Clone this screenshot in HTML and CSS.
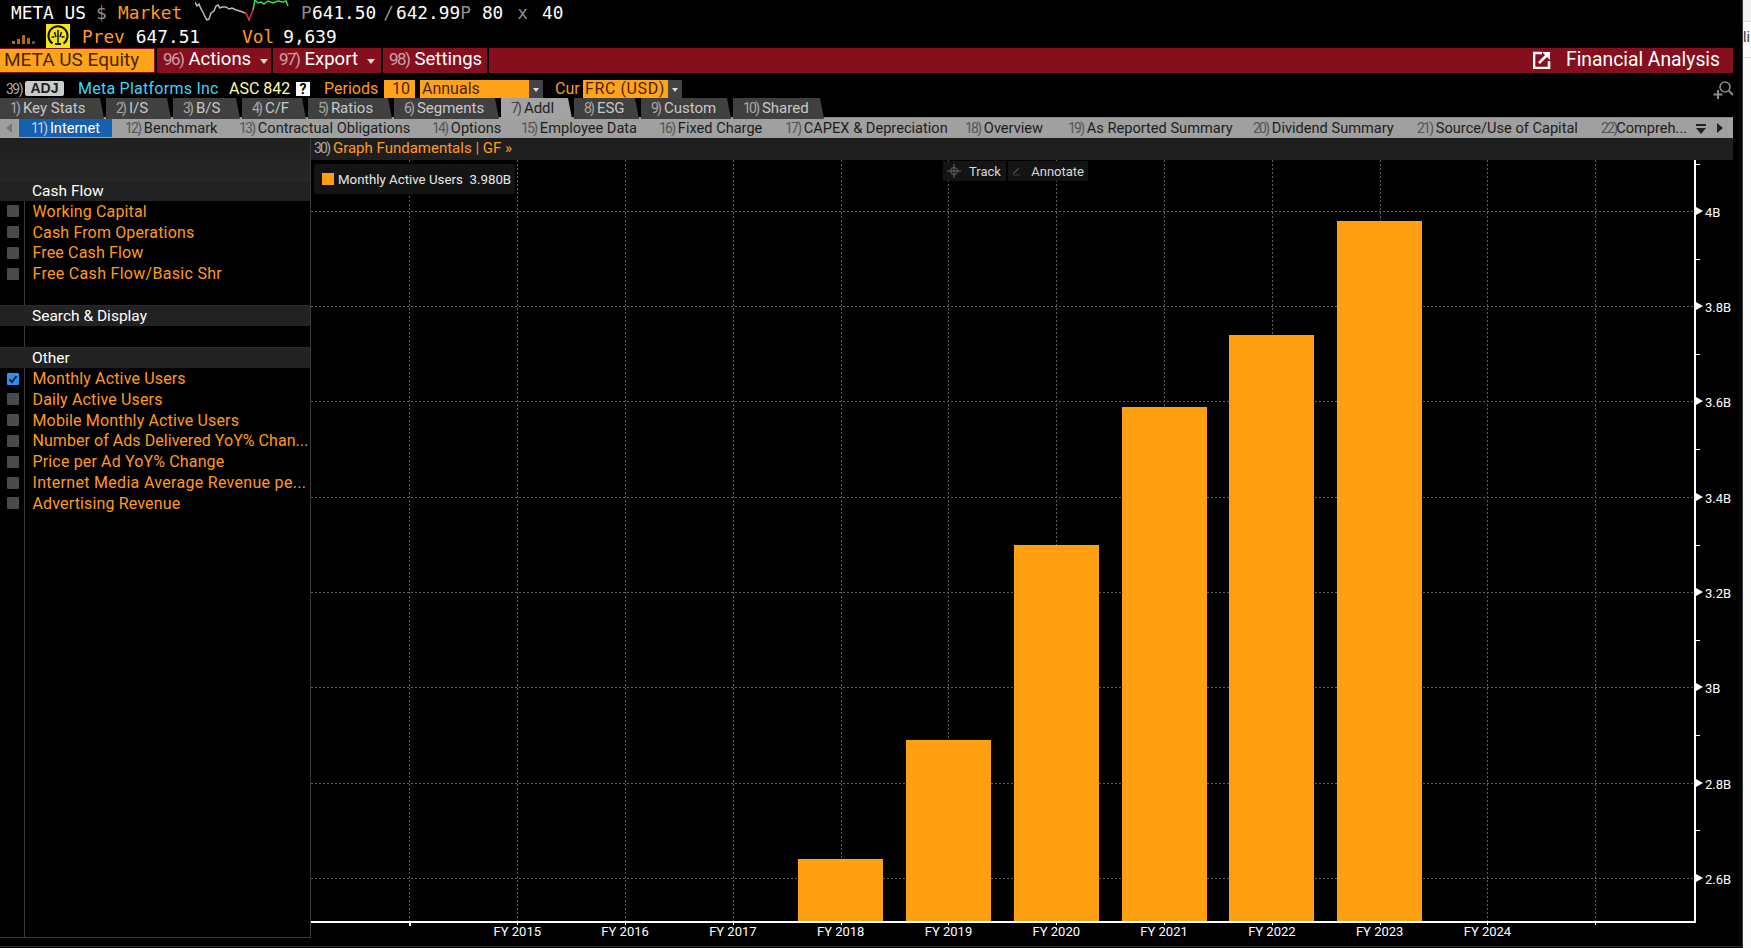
FILE: index.html
```html
<!DOCTYPE html>
<html lang="en">
<head>
<meta charset="utf-8">
<title>META US Equity - Financial Analysis</title>
<link rel="stylesheet" href="styles.css">
</head>
<body>
<div class="terminal">
  <div class="quote">
    <span class="w sp-a">META US</span><span class="g sp-b">$</span><span class="o sp-c">Market</span>
    <svg class="spark" viewBox="0 0 98 24" width="98" height="24"><polyline fill="none" stroke="#bbb" stroke-width="1.500" points="0,2 2,6 4,4 6,9 8,12 10,17 12,20 14,19 16,13 19,11 21,6 23,5 25,8 27,7 31,7 34,9 37,8 41,10 45,11 50,13"/><polyline fill="none" stroke="#e0304a" stroke-width="1.500" points="50,12 52,15 54,20 56,15 58,10"/><polyline fill="none" stroke="#3ddc4a" stroke-width="1.500" points="58,10 59,5 60,0 63,3 66,2 69,4 73,1 78,3 83,1 88,2 91,1 93,6"/></svg>
    <span class="g sp-d">P</span><span class="w">641.50</span><span class="g sp-e">/</span><span class="w">642.99</span><span class="g">P</span><span class="w sp-f">80</span><span class="g sp-g">x</span><span class="w sp-g">40</span>
  </div>
  <div class="quote">
    <svg class="bars-ic" viewBox="0 0 24 10" width="24" height="10"><rect x="0" y="7" width="3" height="3" fill="#b06a10"/><rect x="5" y="5" width="3" height="5" fill="#b06a10"/><rect x="10" y="1" width="3" height="9" fill="#b06a10"/><rect x="15" y="4" width="3" height="6" fill="#b06a10"/><rect x="20" y="7" width="3" height="3" fill="#555"/></svg>
    <span class="gauge"><svg viewBox="0 0 24 24" width="24" height="24"><path d="M6.500 19.500A9.500 9.500 0 1 1 17.500 19.500" fill="none" stroke="#111" stroke-width="2"/><path d="M12 6v14M8.500 8l1.500 5M15.500 8l-1.500 5M5.500 13h3M18.500 13h-3" stroke="#111" stroke-width="1.500" fill="none"/><path d="M9 20h6" stroke="#111" stroke-width="2"/></svg></span>
    <span class="o sp-h">Prev</span><span class="w sp-i">647.51</span><span class="o sp-j">Vol</span><span class="w sp-k">9,639</span>
  </div>
  <div class="redbar">
    <span class="sec">META US Equity</span>
    <span class="act a1"><i>96)</i> Actions <b class="caret"></b></span>
    <span class="act a2"><i>97)</i> Export <b class="caret"></b></span>
    <span class="act a3"><i>98)</i> Settings</span>
    <span class="fa">
      <svg viewBox="0 0 18 18" width="18" height="18"><path d="M9 2H1v15h15V10" fill="none" stroke="#fff" stroke-width="2.600"/><path d="M6 12l9-9" stroke="#fff" stroke-width="2.600"/><path d="M9 1h8v8z" fill="#fff"/></svg>
      Financial Analysis
    </span>
  </div>
  <div class="opts">
    <span class="num n39">39)</span><span class="adj">ADJ</span>
    <span class="cyan">Meta Platforms Inc</span><span class="yel">ASC 842</span><span class="qm">?</span>
    <span class="o lab-p">Periods</span><span class="field f10">10</span><span class="field fann">Annuals</span><span class="dd"></span>
    <span class="o lab-c">Cur</span><span class="field fcur">FRC (USD)</span><span class="dd"></span>
    <svg class="zoomic" viewBox="0 0 22 20" width="22" height="20"><circle cx="13" cy="7" r="5" fill="none" stroke="#8a8a8a" stroke-width="1.600"/><path d="M17 11l4 4M6 10v9M1.500 14.500h9" stroke="#8a8a8a" stroke-width="2" fill="none"/></svg>
  </div>
  <div class="tabs">
    <span class="tab"><i>1)</i> Key Stats</span>
    <span class="tab"><i>2)</i> I/S</span>
    <span class="tab"><i>3)</i> B/S</span>
    <span class="tab"><i>4)</i> C/F</span>
    <span class="tab"><i>5)</i> Ratios</span>
    <span class="tab"><i>6)</i> Segments</span>
    <span class="tab on"><i>7)</i> Addl</span>
    <span class="tab"><i>8)</i> ESG</span>
    <span class="tab"><i>9)</i> Custom</span>
    <span class="tab"><i>10)</i> Shared</span>
  </div>
  <div class="subtabs">
    <span class="arrow-l"></span>
    <span class="sub on"><i>11)</i> Internet</span>
    <span class="sub"><i>12)</i> Benchmark</span>
    <span class="sub"><i>13)</i> Contractual Obligations</span>
    <span class="sub"><i>14)</i> Options</span>
    <span class="sub"><i>15)</i> Employee Data</span>
    <span class="sub"><i>16)</i> Fixed Charge</span>
    <span class="sub"><i>17)</i> CAPEX &amp; Depreciation</span>
    <span class="sub"><i>18)</i> Overview</span>
    <span class="sub"><i>19)</i> As Reported Summary</span>
    <span class="sub"><i>20)</i> Dividend Summary</span>
    <span class="sub"><i>21)</i> Source/Use of Capital</span>
    <span class="sub"><i>22)</i>Compreh...</span>
    <span class="sub-ctl"><span class="menu-ic"></span><span class="arrow-r"></span></span>
  </div>
  <div class="main">
    <aside class="side">
      <div class="side-top"></div>
      <div class="shead">Cash Flow</div>
      <div class="srow"><span class="cb"></span>Working Capital</div>
      <div class="srow"><span class="cb"></span>Cash From Operations</div>
      <div class="srow"><span class="cb"></span>Free Cash Flow</div>
      <div class="srow loose"><span class="cb"></span>Free Cash Flow/Basic Shr</div>
      <div class="sgap"></div>
      <div class="shead">Search &amp; Display</div>
      <div class="sgap"></div>
      <div class="shead">Other</div>
      <div class="srow"><span class="cb chk"><svg viewBox="0 0 12 12" width="12" height="12"><path d="M2.500 6.500l2.500 2.500 4.500-6" fill="none" stroke="#071a33" stroke-width="2"/></svg></span>Monthly Active Users</div>
      <div class="srow"><span class="cb"></span>Daily Active Users</div>
      <div class="srow"><span class="cb"></span>Mobile Monthly Active Users</div>
      <div class="srow tight"><span class="cb"></span>Number of Ads Delivered YoY% Chan...</div>
      <div class="srow"><span class="cb"></span>Price per Ad YoY% Change</div>
      <div class="srow loose"><span class="cb"></span>Internet Media Average Revenue pe...</div>
      <div class="srow"><span class="cb"></span>Advertising Revenue</div>
    </aside>
    <section class="content">
      <div class="gfbar"><i>30)</i> Graph Fundamentals | GF »</div>
      <div class="chart">
        <svg class="grid" width="1385" height="761" viewBox="0 0 1385 761">
          <g stroke="#5c5c5c" stroke-dasharray="2 2" stroke-width="1">
            <path d="M0 51.500H1384M0 146.500H1384M0 241.500H1384M0 337.500H1384M0 432.500H1384M0 527.500H1384M0 623.500H1384M0 718.500H1384"/>
            <path d="M98.500 0V761M206.500 0V761M314.500 0V761M422.500 0V761M530.500 0V761M637.500 0V761M745.500 0V761M853.500 0V761M961.500 0V761M1069.500 0V761M1176.500 0V761M1284.500 0V761"/>
          </g>
        </svg>
        <div class="plot">
          <div class="col"><div class="bar" style="height:62px"></div></div>
          <div class="col"><div class="bar" style="height:181px"></div></div>
          <div class="col"><div class="bar" style="height:376px"></div></div>
          <div class="col"><div class="bar" style="height:514px"></div></div>
          <div class="col"><div class="bar" style="height:586px"></div></div>
          <div class="col"><div class="bar" style="height:700px"></div></div>
        </div>
        <div class="legend"><span class="swatch"></span>Monthly Active Users&nbsp; 3.980B</div>
        <div class="tools">
          <span class="tool"><svg viewBox="0 0 14 14" width="14" height="14"><circle cx="7" cy="7" r="3.500" fill="none" stroke="#666"/><path d="M7 0v14M0 7h14" stroke="#666"/></svg>Track</span>
          <span class="tool"><svg viewBox="0 0 14 14" width="14" height="14"><path d="M2 11L10 3" stroke="#777" stroke-width="1.500"/><path d="M1 13h11" stroke="#555"/></svg>Annotate</span>
        </div>
        <div class="yaxis">
          <span class="tick" style="top:4px"></span>
          <span class="ylab" style="top:51px">4B</span>
          <span class="tick" style="top:99px"></span>
          <span class="ylab" style="top:146px">3.8B</span>
          <span class="tick" style="top:194px"></span>
          <span class="ylab" style="top:241px">3.6B</span>
          <span class="tick" style="top:289px"></span>
          <span class="ylab" style="top:337px">3.4B</span>
          <span class="tick" style="top:385px"></span>
          <span class="ylab" style="top:432px">3.2B</span>
          <span class="tick" style="top:480px"></span>
          <span class="ylab" style="top:527px">3B</span>
          <span class="tick" style="top:575px"></span>
          <span class="ylab" style="top:623px">2.8B</span>
          <span class="tick" style="top:670px"></span>
          <span class="ylab" style="top:718px">2.6B</span>
        </div>
        <div class="xaxis">
          <span class="xlab start"></span>
          <span class="xlab">FY 2015</span><span class="xlab">FY 2016</span><span class="xlab">FY 2017</span><span class="xlab">FY 2018</span><span class="xlab">FY 2019</span><span class="xlab">FY 2020</span><span class="xlab">FY 2021</span><span class="xlab">FY 2022</span><span class="xlab">FY 2023</span><span class="xlab">FY 2024</span>
          <span class="xlab"></span>
        </div>
      </div>
    </section>
  </div>
</div>
<div class="strip">
  <div class="strip-top"></div>
  <div class="strip-text">li</div>
</div>
</body>
</html>
```
FILE: styles.css
```css
*{box-sizing:border-box}
html,body{margin:0;height:100%;background:#000;overflow:hidden}
body{display:flex;width:1751px;height:948px;font-family:Roboto,"Liberation Sans",sans-serif;color:#fff}
i{font-style:normal}
.terminal{width:1742px;height:947px;flex:none;display:flex;flex-direction:column;border-bottom:1px solid #2e2e2e}
.strip{flex:1;background:#fafafa;border-left:1px solid #333;color:#333;overflow:hidden}
.strip-top{height:22px;background:#f0f0f0;border-bottom:1px solid #ddd}
.strip-text{height:36px;border-bottom:1px solid #ddd;font-size:14px;line-height:30px}

.quote{height:24px;display:flex;align-items:center;padding:1px 0 0 11px;font-family:"DejaVu Sans Mono",monospace;font-size:17.800px;white-space:nowrap;flex:none}
.w{color:#fff}.g{color:#8d8d8d}.o{color:#ff9a1f}
.sp-a{width:85px}.sp-b{width:22px}.sp-c{width:77px}
.spark{flex:none;margin-right:8px;align-self:flex-start;margin-top:-1px}
.sp-d{width:11px}.sp-e{margin:0 2px 0 7px}.sp-f{margin-left:11px}.sp-g{margin-left:14px}
.bars-ic{margin:5px 0 0 1px;flex:none}
.gauge{width:24px;height:24px;margin:-1px 0 0 10px;background:#f5e60c;flex:none;display:flex}
.sp-h{margin-left:12px}.sp-i{margin-left:11px}.sp-j{margin-left:42px}.sp-k{margin-left:9px}

.redbar{height:25px;background:#860f1e;display:flex;align-items:stretch;font-size:18.500px;flex:none;white-space:nowrap;width:1733px;line-height:23px}
.sec{width:154px;margin:1px 0;background:#ffa31a;color:#4a2500;padding-left:4px;line-height:22px;font-size:19px}
.act{display:flex;align-items:center;gap:5px;border-left:2px solid #000;padding:0 0 2px 6px}
.act i{color:#c9a0a6;letter-spacing:-1.500px;font-size:17px}
.a1{margin-left:1px;width:116px}.a2{width:110px}.a3{width:108px;border-right:2px solid #000}
.caret{display:inline-block;width:0;height:0;border:4px solid transparent;border-top:5px solid #ddd;border-bottom:0;margin:3px 0 0 4px}
.fa{margin-left:auto;display:flex;align-items:center;gap:15px;padding:0 13px 2px 0;font-size:19.300px}

.opts{height:19px;margin-top:6px;display:flex;align-items:center;font-size:16px;white-space:nowrap;flex:none;position:relative}
.num{color:#aaa;letter-spacing:-1.500px;font-size:14px}
.n39{margin-left:6px;width:19px}
.adj{width:39px;height:15px;background:#ccc;color:#222;font-family:"Liberation Sans",sans-serif;font-weight:700;font-size:14px;line-height:15px;text-align:center;border-radius:2px}
.cyan{color:#3fd3f5;margin-left:14px;width:151px;letter-spacing:.25px}
.yel{color:#ffffa5;width:67px}
.qm{width:14px;height:14px;background:#fff;color:#000;font-weight:700;font-size:14px;line-height:14px;text-align:center}
.lab-p{margin-left:14px;width:60px}
.field{height:18px;line-height:18px;background:#ffa31a;color:#4a2500;font-size:16px}
.f10{width:31px;text-align:right;padding-right:5px}
.fann{width:109px;margin-left:5px;padding-left:2px}
.dd{width:14px;height:18px;background:#444;position:relative}
.dd::after{content:"";position:absolute;left:4px;top:8px;border:3px solid transparent;border-top:4px solid #ddd;border-bottom:0}
.lab-c{margin-left:12px;width:28px}
.fcur{width:85px;padding-left:2px;letter-spacing:.6px}
.zoomic{position:absolute;left:1712px;top:1px}

.tabs{height:19px;display:grid;grid-template-columns:106px 67px 69px 66px 86px 107px 73px 67px 92px 93px;font-size:15px;flex:none;white-space:nowrap}
.tab{background:#404040;color:#c8c8c8;padding-left:10px;line-height:21px;clip-path:polygon(0 0,calc(100% - 6px) 0,calc(100% - 2px) 100%,0 100%)}
.tab i{color:#a8a8a8;letter-spacing:-1.800px;font-size:14px}
.tab.on{background:#a3a3a3;color:#222}
.tab.on i{color:#444}

.subtabs{height:21px;background:#a0a0a0;border-top:1px solid #8c8c8c;display:grid;grid-template-columns:19px 106px 114px 193px 89px 138px 126px 180px 103px 185px 164px 184px 95px 1fr;font-size:14.600px;color:#1c1c1c;white-space:nowrap;align-items:center;width:1733px;flex:none}
.sub{line-height:19px}
.sub i{color:#555;letter-spacing:-1.800px;font-size:14px}
.sub.on{background:#1660b0;color:#fff;width:93px;height:18px;line-height:18px;text-align:center}
.sub.on i{color:#b9d4f0}
.arrow-l{width:0;height:0;border:5px solid transparent;border-right:6px solid #777;border-left:0;margin-left:6px}
.sub-ctl{display:flex;align-items:center;gap:11px}
.menu-ic{width:10px;height:9px;border-top:2px solid #222;position:relative}
.menu-ic::after{content:"";position:absolute;left:0;top:2px;border:5px solid transparent;border-top:6px solid #222;border-bottom:0}
.arrow-r{width:0;height:0;border:5px solid transparent;border-left:6px solid #222;border-right:0}

.main{flex:1;display:flex;width:1733px;min-height:0}
.side{width:311px;height:800px;flex:none;border-right:1px solid #3a3a3a;border-bottom:1px solid #3a3a3a;background:linear-gradient(90deg,transparent 24px,#3a3a3a 24px,#3a3a3a 25px,transparent 25px);font-size:16px;letter-spacing:.15px}
.side-top{height:42px;background:linear-gradient(#1f1f1f,#262626)}
.shead{height:21px;background:#222;padding-left:32px;line-height:20px;border-top:1px solid #2a2a2a;color:#fff;font-size:15.500px;letter-spacing:0}
.srow{height:20.800px;display:flex;align-items:center;color:#ff9a1f;white-space:nowrap}
.srow.tight{letter-spacing:.05px}
.srow.loose{letter-spacing:.3px}
.cb{width:12px;height:12px;margin:0 14px 0 6.500px;background:#4a4a4a;border-radius:1px;flex:none;display:flex}
.chk{background:#2d8fee}
.sgap{height:21px}

.content{flex:1;display:flex;flex-direction:column;min-width:0}
.gfbar{height:22px;background:#1f1f1f;color:#ff9a1f;font-size:15px;line-height:20px;padding-left:3px;flex:none;white-space:nowrap}
.gfbar i{color:#aaa;letter-spacing:-1.800px;font-size:14px}
.chart{position:relative;flex:1}
.grid{position:absolute;left:0;top:0;display:block}
.plot{position:absolute;left:475.800px;top:0;height:761px;display:flex;align-items:flex-end}
.col{width:107.800px;display:flex;justify-content:center;flex:none}
.bar{width:85px;background:#ffa012}
.legend{position:absolute;left:3px;top:4px;width:201px;height:30px;background:#141414;border-radius:3px;display:flex;align-items:center;padding-left:8px;font-size:13.300px;color:#e8e8e8;white-space:pre}
.swatch{width:12px;height:12px;background:#ffa012;margin-right:4px}
.tools{position:absolute;left:632px;top:1px;display:flex;gap:2px}
.tool{height:20px;background:#141414;display:flex;align-items:center;gap:10px;padding:0 4px;font-size:13px;color:#d8d8d8}
.tool:first-child{width:63px;gap:8px}.tool:last-child{width:80px}
.yaxis{position:absolute;left:1383px;top:0;height:762px;width:60px;border-left:2px solid #fff}
.ylab{position:absolute;left:0;font-size:13px;color:#fff;line-height:14px;margin-top:-5px;padding-left:9px}
.ylab::before{content:"";position:absolute;left:0;top:1px;border:4px solid transparent;border-left:7px solid #fff;border-right:0}
.tick{position:absolute;left:0;width:4px;height:1px;background:#fff}
.xaxis{position:absolute;left:0;top:761px;width:1385px;border-top:2px solid #fff;padding-left:44.600px;display:flex}
.xlab{position:relative;width:107.800px;flex:none;font-size:13px;color:#fff;text-align:center;padding-top:1px;white-space:nowrap;height:22px}
.xlab::before{content:"";position:absolute;left:50%;top:0;width:1px;height:2px;background:#fff}
.xlab.start::before{width:2px;height:3px}
```
